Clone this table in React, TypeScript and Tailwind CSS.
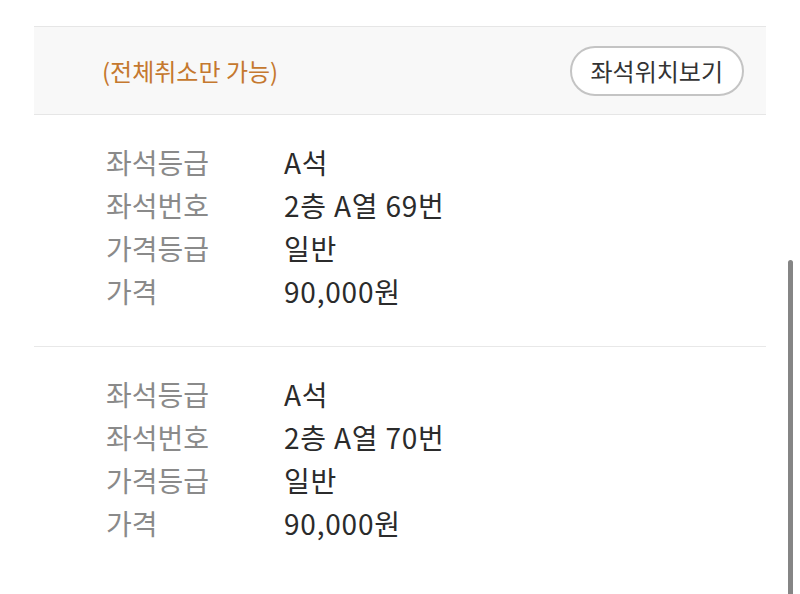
const seats = [
  { grade: "A석", number: "2층 A열 69번", priceGrade: "일반", price: "90,000원" },
  { grade: "A석", number: "2층 A열 70번", priceGrade: "일반", price: "90,000원" },
]

function SeatInfo({ seat }: { seat: (typeof seats)[number] }) {
  const rows = [
    ["좌석등급", seat.grade],
    ["좌석번호", seat.number],
    ["가격등급", seat.priceGrade],
    ["가격", seat.price],
  ]
  return (
    <div className="pt-[25px] pb-[34px] pl-[72px]">
      {rows.map(([label, value]) => (
        <div key={label} className="flex h-[43px] items-center text-[28px] leading-none">
          <span className="w-[178px] text-[#8a8a8a]">{label}</span>
          <span className="tracking-[0.8px] text-[#2b2b2b]">{value}</span>
        </div>
      ))}
    </div>
  )
}

export default function App() {
  return (
    <div
      className="relative h-[594px] w-[800px] overflow-hidden bg-white"
      style={{ fontFamily: '"Noto Sans CJK KR", "Noto Sans", sans-serif' }}
    >
      <div className="mx-[34px] pt-[26px]">
        {/* 상단 안내 */}
        <div className="flex h-[89px] items-center justify-between border-y border-[#e6e6e6] bg-[#f8f8f8] pl-[68px] pr-[22px]">
          <span className="text-[24px] leading-none text-[#c5782f]">(전체취소만 가능)</span>
          <button className="h-[50px] rounded-full border-2 border-[#c4c4c4] bg-white px-[19px] text-[24px] leading-none text-[#333]">
            좌석위치보기
          </button>
        </div>

        {seats.map((seat, i) => (
          <div key={i} className={i > 0 ? "border-t border-[#e8e8e8]" : ""}>
            <SeatInfo seat={seat} />
          </div>
        ))}
      </div>

      {/* 스크롤바 */}
      <div className="absolute left-[788px] top-[260px] h-[340px] w-[5px] rounded-full bg-[#858585]" />
    </div>
  )
}
